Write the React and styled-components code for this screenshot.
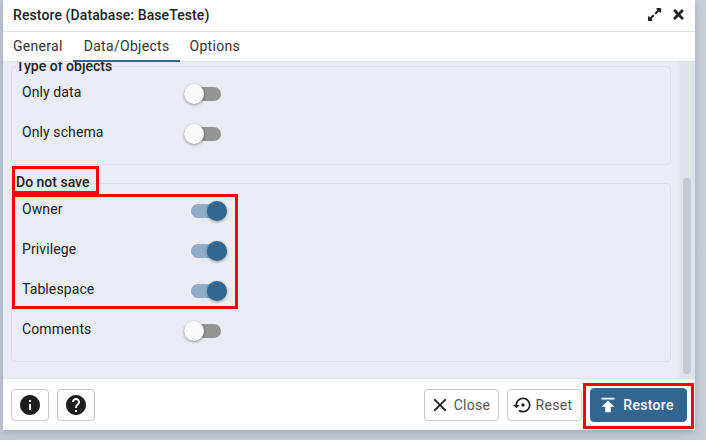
import React from 'react';
import styled, { createGlobalStyle } from 'styled-components';
import { FaExpandAlt, FaTimes } from 'react-icons/fa';

const GlobalStyle = createGlobalStyle`
  html, body {
    margin: 0;
    padding: 0;
    background: #c1c7d3;
    overflow: hidden;
  }
  *, *::before, *::after {
    box-sizing: border-box;
  }
`;

const Page = styled.div`
  width: 706px;
  height: 440px;
  padding: 0 11px 10px 3px;
  background: linear-gradient(90deg, #c3c9d5 0%, #c3c9d5 95%, #c9ced9 100%);
  font-family: Roboto, 'Liberation Sans', sans-serif;
  color: #222;
`;

const Dialog = styled.div`
  width: 692px;
  height: 430px;
  display: flex;
  flex-direction: column;
  background: #fff;
  box-shadow: 0 2px 8px rgba(90, 100, 125, 0.35);
`;

const TitleBar = styled.header`
  height: 32px;
  flex: none;
  display: flex;
  align-items: center;
  justify-content: space-between;
  padding: 0 9px 2px 10px;
  border-bottom: 1px solid #dde0e6;
`;

const Title = styled.h1`
  margin: 0;
  font-size: 14px;
  font-weight: 500;
  letter-spacing: 0.1px;
  color: #222;
`;

const TitleIcons = styled.div`
  display: flex;
  align-items: center;
  gap: 9px;
  color: #222;
  svg {
    display: block;
  }
`;

const Tabs = styled.nav`
  height: 30px;
  flex: none;
  display: flex;
  border-bottom: 1px solid #dde0e6;
`;

const Tab = styled.div`
  height: 30px;
  padding: 6px 10px 0 ${p => (p.$active ? 11 : 10)}px;
  font-size: 14px;
  letter-spacing: 0.3px;
  color: #333;
  border-bottom: 2px solid ${p => (p.$active ? '#326690' : 'transparent')};
`;

const Body = styled.main`
  flex: 1;
  min-height: 0;
  display: flex;
  background: #e9ecf2;
  overflow: hidden;
`;

const Content = styled.div`
  flex: 1;
  min-width: 0;
  padding: 4px 8px 0;
  display: flex;
  flex-direction: column;
  gap: 18px;
`;

const Scrollbar = styled.div`
  width: 16px;
  flex: none;
  background: #dfe3ea;
  padding: 116px 4px 4px;
`;

const Thumb = styled.div`
  height: 100%;
  border-radius: 4px;
  background: #c3c9d5;
`;

const Group = styled.section`
  position: relative;
  height: ${p => p.$height}px;
  padding: 6px 10px 0;
  border: 1px solid #dde0e6;
  border-radius: 4px;
`;

const Legend = styled.div`
  position: absolute;
  left: 4px;
  top: ${p => (p.$clipped ? -9 : -10)}px;
  font-size: 14px;
  font-weight: 500;
  line-height: 16px;
  color: #222;
  background: #e9ecf2;
  ${p => p.$clipped && 'clip-path: inset(4px 0 0 0);'}
  ${p => p.$marked && `
    &::after {
      content: '';
      position: absolute;
      left: -4px;
      top: -8px;
      width: 87px;
      height: 28px;
      border: 3px solid #f00;
      pointer-events: none;
    }
  `}
`;

const Marked = styled.div`
  position: relative;
  &::after {
    content: '';
    position: absolute;
    left: -10px;
    top: 4px;
    width: 226px;
    height: 115px;
    border: 3px solid #f00;
    pointer-events: none;
  }
`;

const Row = styled.div`
  height: 40px;
  display: grid;
  grid-template-columns: 162px auto;
  align-items: center;
  justify-content: start;
  font-size: 14px;
  color: #222;
  letter-spacing: 0.1px;
`;

const RowLabel = styled.span`
  position: relative;
  top: -1px;
`;

const Toggle = styled.span`
  position: relative;
  top: 1px;
  display: block;
  width: 44px;
  height: 20px;
  &::before {
    content: '';
    position: absolute;
    top: 3px;
    left: ${p => (p.$on ? '7px' : '0')};
    width: ${p => (p.$on ? '30px' : '37px')};
    height: 14px;
    border-radius: 7px;
    background: ${p => (p.$on ? '#91aac5' : '#949494')};
  }
  &::after {
    content: '';
    position: absolute;
    top: 0;
    left: ${p => (p.$on ? '23px' : '0')};
    width: 20px;
    height: 20px;
    border-radius: 50%;
    background: ${p => (p.$on ? '#326690' : '#fafafa')};
    box-shadow: 0 1px 3px rgba(0, 0, 0, 0.4);
  }
`;

const Footer = styled.footer`
  height: 52px;
  flex: none;
  display: flex;
  align-items: center;
  justify-content: space-between;
  padding: 0 8px;
  background: #fff;
  border-top: 1px solid #dde0e6;
`;

const ButtonSet = styled.div`
  display: flex;
  align-items: center;
  gap: 8px;
`;

const IconButton = styled.button`
  width: 38px;
  height: 32px;
  padding: 0;
  display: flex;
  align-items: center;
  justify-content: center;
  background: #fff;
  border: 1px solid #c3c9d5;
  border-radius: 4px;
  color: #1e1e1e;
`;

const Button = styled.button`
  position: relative;
  width: ${p => p.$width}px;
  height: ${p => (p.$primary ? 34 : 32)}px;
  padding: 0 ${p => (p.$primary ? 6 : 4)}px 0 0;
  display: flex;
  align-items: center;
  justify-content: center;
  gap: ${p => (p.$primary ? 4 : 3)}px;
  font-family: inherit;
  font-size: 14px;
  letter-spacing: 0.3px;
  font-weight: ${p => (p.$primary ? 500 : 400)};
  color: ${p => (p.$primary ? '#fff' : '#555')};
  background: ${p => (p.$primary ? '#326690' : '#fff')};
  border: 1px solid ${p => (p.$primary ? '#326690' : '#c3c9d5')};
  border-radius: 4px;
  svg {
    color: ${p => (p.$primary ? '#fff' : '#222')};
  }
  ${p => p.$primary && `
    &::after {
      content: '';
      position: absolute;
      left: -8px;
      top: -6px;
      width: 111px;
      height: 46px;
      border: 3px solid #f00;
      pointer-events: none;
    }
  `}
`;

const Icon = ({ d, size = 24 }) => (
  <svg width={size} height={size} viewBox="0 0 24 24" fill="currentColor">
    <path d={d} />
  </svg>
);

const ICONS = {
  info: 'M12 2C6.48 2 2 6.48 2 12s4.48 10 10 10 10-4.48 10-10S17.52 2 12 2zm1 15h-2v-6h2v6zm0-8h-2V7h2v2z',
  help: 'M12 2C6.48 2 2 6.48 2 12s4.48 10 10 10 10-4.48 10-10S17.52 2 12 2zm1 17h-2v-2h2v2zm2.07-7.75l-.9.92C13.45 12.9 13 13.5 13 15h-2v-.5c0-1.1.45-2.1 1.17-2.83l1.24-1.26c.37-.36.59-.86.59-1.41 0-1.1-.9-2-2-2s-2 .9-2 2H8c0-2.21 1.79-4 4-4s4 1.79 4 4c0 .88-.36 1.68-.93 2.25z',
  close: 'M19 6.41L17.59 5 12 10.59 6.41 5 5 6.41 10.59 12 5 17.59 6.41 19 12 13.41 17.59 19 19 17.59 13.41 12z',
  reset: 'M14 12c0-1.1-.9-2-2-2s-2 .9-2 2 .9 2 2 2 2-.9 2-2zm-2-9c-4.97 0-9 4.03-9 9H0l4 4 4-4H5c0-3.87 3.13-7 7-7s7 3.13 7 7-3.13 7-7 7c-1.51 0-2.91-.49-4.06-1.3l-1.42 1.44C8.04 20.3 9.94 21 12 21c4.97 0 9-4.03 9-9s-4.03-9-9-9z',
  publish: 'M5 4v2h14V4H5zm0 10h4v6h6v-6h4l-7-7-7 7z',
};

function ToggleRow({ label, on }) {
  return (
    <Row>
      <RowLabel>{label}</RowLabel>
      <Toggle $on={on} />
    </Row>
  );
}

export default function App() {
  return (
    <Page>
      <GlobalStyle />
      <Dialog>
        <TitleBar>
          <Title>Restore (Database: BaseTeste)</Title>
          <TitleIcons>
            <FaExpandAlt size={15} />
            <FaTimes size={15} />
          </TitleIcons>
        </TitleBar>
        <Tabs>
          <Tab>General</Tab>
          <Tab $active>Data/Objects</Tab>
          <Tab>Options</Tab>
        </Tabs>
        <Body>
          <Content>
            <Group $height={99}>
              <Legend $clipped>Type of objects</Legend>
              <ToggleRow label="Only data" />
              <ToggleRow label="Only schema" />
            </Group>
            <Group $height={179}>
              <Legend $marked>Do not save</Legend>
              <Marked>
                <ToggleRow label="Owner" on />
                <ToggleRow label="Privilege" on />
                <ToggleRow label="Tablespace" on />
              </Marked>
              <ToggleRow label="Comments" />
            </Group>
          </Content>
          <Scrollbar>
            <Thumb />
          </Scrollbar>
        </Body>
        <Footer>
          <ButtonSet>
            <IconButton><Icon d={ICONS.info} /></IconButton>
            <IconButton><Icon d={ICONS.help} /></IconButton>
          </ButtonSet>
          <ButtonSet>
            <Button $width={75}><Icon d={ICONS.close} size={22} />Close</Button>
            <Button $width={75}><Icon d={ICONS.reset} size={20} />Reset</Button>
            <Button $width={97} $primary><Icon d={ICONS.publish} size={22} />Restore</Button>
          </ButtonSet>
        </Footer>
      </Dialog>
    </Page>
  );
}
